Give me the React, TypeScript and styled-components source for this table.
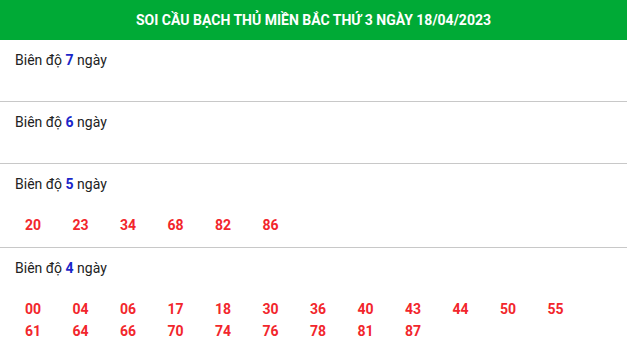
import React from 'react';
import styled, { createGlobalStyle } from 'styled-components';

const GlobalStyle = createGlobalStyle`
  body {
    margin: 0;
    background: #fff;
    font-family: Roboto, "Liberation Sans", Arial, sans-serif;
  }
`;

const Wrapper = styled.div`
  width: 627px;
`;

const Header = styled.h2`
  margin: 0;
  height: 40px;
  display: flex;
  align-items: center;
  justify-content: center;
  background: #00aa36;
  color: #fff;
  font-size: 14px;
  font-weight: 700;
  text-transform: uppercase;
`;

const Section = styled.div`
  padding: 10px 15px 11px;
  border-bottom: 1px solid #c8c8c8;
`;

const Title = styled.div`
  font-size: 14px;
  line-height: 20px;
  color: #222;
`;

const Days = styled.b`
  color: #1a26c9;
  font-weight: 700;
`;

const Numbers = styled.div`
  margin-top: 20px;
  padding-left: 10px;
  display: flex;
  flex-wrap: wrap;
`;

const Num = styled.span`
  width: 47.5px;
  font-size: 14px;
  line-height: 22px;
  font-weight: 700;
  color: #f2262c;
`;

const data: { days: number; nums: string[] }[] = [
  { days: 7, nums: [] },
  { days: 6, nums: [] },
  { days: 5, nums: ['20', '23', '34', '68', '82', '86'] },
  {
    days: 4,
    nums: [
      '00', '04', '06', '17', '18', '30', '36', '40', '43', '44', '50', '55',
      '61', '64', '66', '70', '74', '76', '78', '81', '87',
    ],
  },
];

export default function App() {
  return (
    <Wrapper>
      <GlobalStyle />
      <Header>Soi cầu bạch thủ miền Bắc thứ 3 ngày 18/04/2023</Header>
      {data.map(s => (
        <Section key={s.days}>
          <Title>
            Biên độ <Days>{s.days}</Days> ngày
          </Title>
          <Numbers>
            {s.nums.map(n => (
              <Num key={n}>{n}</Num>
            ))}
          </Numbers>
        </Section>
      ))}
    </Wrapper>
  );
}
